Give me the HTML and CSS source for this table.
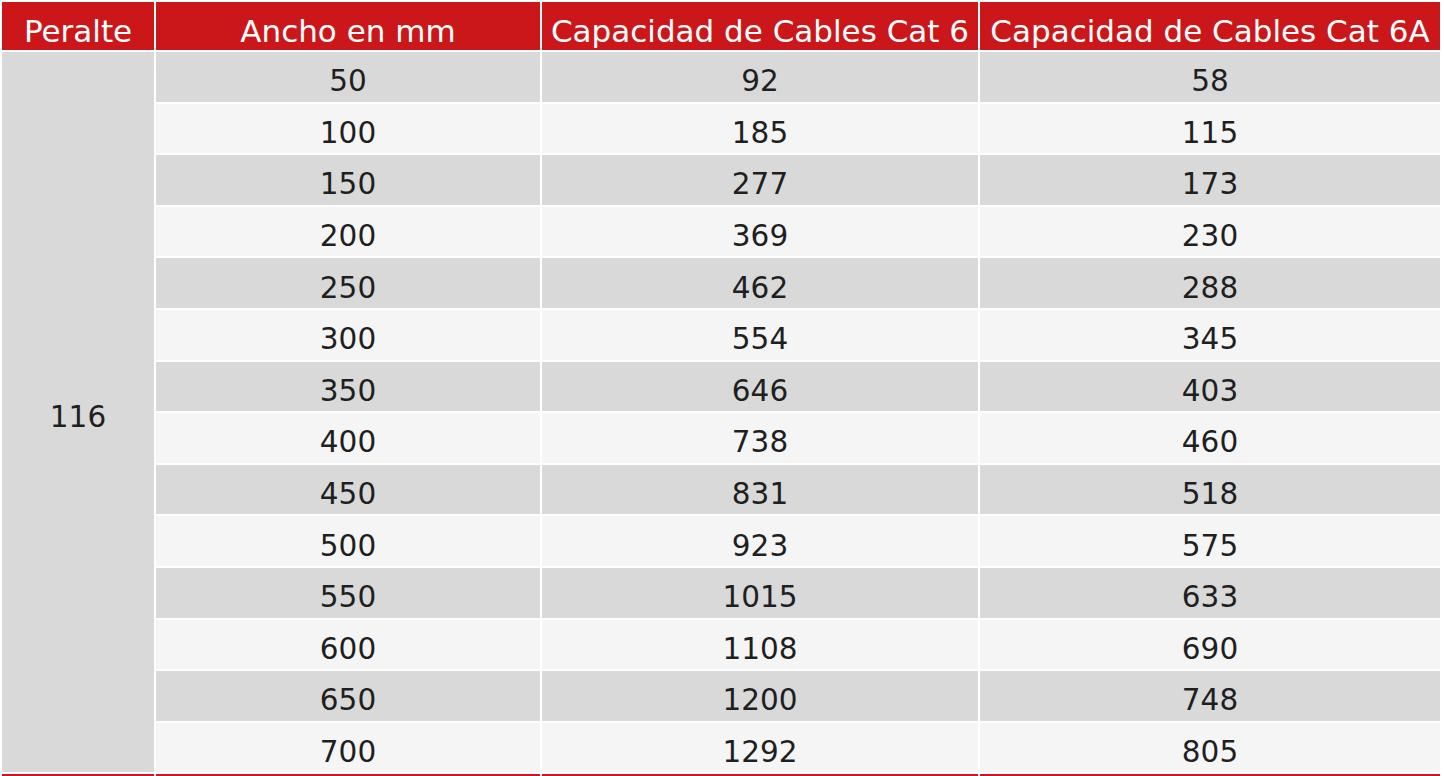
FILE: index.html
```html
<!DOCTYPE html>
<html lang="es">
<head>
<meta charset="utf-8">
<title>Capacidad de Cables</title>
<link rel="stylesheet" href="styles.css">
</head>
<body>
<table class="spec">
  <colgroup>
    <col class="c1"><col class="c2"><col class="c3"><col class="c4">
  </colgroup>
  <thead>
    <tr class="head">
      <th>Peralte</th>
      <th>Ancho en mm</th>
      <th>Capacidad de Cables Cat 6</th>
      <th>Capacidad de Cables Cat 6A</th>
    </tr>
  </thead>
  <tbody>
    <tr class="odd"><td class="peralte" rowspan="14">116</td><td>50</td><td>92</td><td>58</td></tr>
    <tr class="even"><td>100</td><td>185</td><td>115</td></tr>
    <tr class="odd"><td>150</td><td>277</td><td>173</td></tr>
    <tr class="even"><td>200</td><td>369</td><td>230</td></tr>
    <tr class="odd"><td>250</td><td>462</td><td>288</td></tr>
    <tr class="even"><td>300</td><td>554</td><td>345</td></tr>
    <tr class="odd"><td>350</td><td>646</td><td>403</td></tr>
    <tr class="even"><td>400</td><td>738</td><td>460</td></tr>
    <tr class="odd"><td>450</td><td>831</td><td>518</td></tr>
    <tr class="even"><td>500</td><td>923</td><td>575</td></tr>
    <tr class="odd"><td>550</td><td>1015</td><td>633</td></tr>
    <tr class="even"><td>600</td><td>1108</td><td>690</td></tr>
    <tr class="odd"><td>650</td><td>1200</td><td>748</td></tr>
    <tr class="even"><td>700</td><td>1292</td><td>805</td></tr>
  </tbody>
</table>
<div class="next-strip">
  <span></span><span></span><span></span><span></span>
</div>
</body>
</html>
```
FILE: styles.css
```css
html, body {
  margin: 0;
  padding: 0;
  background: #ffffff;
  overflow: hidden;
}
body {
  font-family: "DejaVu Sans", "Liberation Sans", sans-serif;
  color: #1f1f1f;
}
.spec {
  width: 1442px;
  table-layout: fixed;
  border-collapse: separate;
  border-spacing: 2px;
}
.c1 { width: 152px; }
.c2 { width: 384px; }
.c3 { width: 436px; }
.c4 { width: 460px; }
.head th {
  background: #cc171a;
  color: #ffffff;
  font-weight: normal;
  font-size: 31px;
  height: 48px;
  padding: 10px 0 0;
  box-sizing: border-box;
  white-space: nowrap;
  line-height: 38px;
  text-align: center;
  overflow: hidden;
}
td {
  font-size: 29.5px;
  text-align: center;
  height: 49.6px;
  padding: 9px 0 0;
  box-sizing: border-box;
  line-height: 40px;
}
.odd td { background: #d9d9d9; }
.even td { background: #f5f5f5; }
td.peralte { background: #d9d9d9; }
.next-strip {
  display: grid;
  grid-template-columns: 152px 384px 436px 460px;
  column-gap: 2px;
  padding: 0 2px;
  height: 10px;
}
.next-strip span {
  background: #cc171a;
}
```
